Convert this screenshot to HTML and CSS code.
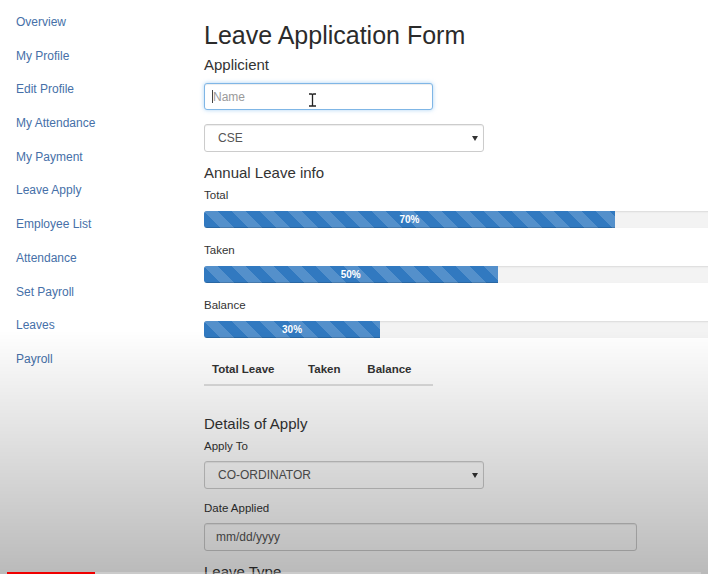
FILE: index.html
```html
<!DOCTYPE html>
<html lang="en">
<head>
<meta charset="utf-8">
<title>Leave Application Form</title>
<link rel="stylesheet" href="styles.css">
</head>
<body>
<div class="page">
  <nav class="sidebar">
    <a class="nav-link" href="#">Overview</a>
    <a class="nav-link" href="#">My Profile</a>
    <a class="nav-link" href="#">Edit Profile</a>
    <a class="nav-link" href="#">My Attendance</a>
    <a class="nav-link" href="#">My Payment</a>
    <a class="nav-link" href="#">Leave Apply</a>
    <a class="nav-link" href="#">Employee List</a>
    <a class="nav-link" href="#">Attendance</a>
    <a class="nav-link" href="#">Set Payroll</a>
    <a class="nav-link" href="#">Leaves</a>
    <a class="nav-link" href="#">Payroll</a>
  </nav>
  <main class="content">
    <h1 class="title">Leave Application Form</h1>
    <h4 class="section">Applicient</h4>
    <div class="name-field">
      <input class="input input-name" type="text" placeholder="Name">
      <span class="text-caret"></span>
      <svg class="ibeam" width="9" height="14" viewBox="0 0 9 14"><path d="M1 1h2.5q1 0 1 1v10q0 1 -1 1H1M8 1H5.5q-1 0 -1 1v10q0 1 1 1H8" fill="none" stroke="#222" stroke-width="1.3"/></svg>
    </div>
    <div class="select-wrap">
      <select class="select"><option>CSE</option></select>
    </div>
    <h4 class="section section-annual">Annual Leave info</h4>
    <div class="label">Total</div>
    <div class="progress"><div class="progress-bar" style="width:70%">70%</div></div>
    <div class="label label-gap">Taken</div>
    <div class="progress"><div class="progress-bar" style="width:50%">50%</div></div>
    <div class="label label-gap">Balance</div>
    <div class="progress"><div class="progress-bar" style="width:30%">30%</div></div>
    <table class="summary">
      <thead>
        <tr><th>Total Leave</th><th>Taken</th><th>Balance</th></tr>
      </thead>
    </table>
    <h4 class="section">Details of Apply</h4>
    <div class="label label-small-gap">Apply To</div>
    <div class="select-wrap select-wrap-tight">
      <select class="select"><option>CO-ORDINATOR</option></select>
    </div>
    <div class="label label-mid-gap">Date Applied</div>
    <input class="input input-date" type="text" placeholder="mm/dd/yyyy">
    <h4 class="section section-leave-type">Leave Type</h4>
  </main>
</div>
<div class="shade"></div>
<div class="yt-progress"><div class="yt-played"></div></div>
</body>
</html>
```
FILE: styles.css
```css
html, body {
  margin: 0;
  padding: 0;
  height: 100%;
  overflow: hidden;
  background: #ffffff;
  font-family: "Liberation Sans", Arial, Helvetica, sans-serif;
  color: #333333;
}

.page {
  display: flex;
  align-items: flex-start;
  width: 820px;
}

.sidebar {
  width: 188px;
  flex: none;
  padding: 6px 0 0 16px;
  display: flex;
  flex-direction: column;
}

.nav-link {
  display: block;
  font-size: 12px;
  line-height: 33.7px;
  height: 33.7px;
  color: #4670a8;
  text-decoration: none;
  white-space: nowrap;
}

.content {
  width: 587px;
  flex: none;
  padding-top: 20px;
}

.title {
  margin: 0;
  font-size: 25px;
  line-height: 30px;
  font-weight: 400;
  color: #2b2b2b;
}

.section {
  margin: 6px 0 0 0;
  font-size: 15px;
  line-height: 18px;
  font-weight: 400;
  color: #333333;
}

.section-annual { margin-top: 12px; }

.section-leave-type { margin-top: 12px; }

.name-field {
  position: relative;
  width: 229px;
  margin-top: 9px;
}

.input {
  box-sizing: border-box;
  display: block;
  height: 27px;
  border: 1px solid #cccccc;
  border-radius: 3px;
  font-family: "Liberation Sans", Arial, Helvetica, sans-serif;
  font-size: 12px;
  color: #555555;
  background: #ffffff;
  outline: none;
  box-shadow: inset 0 1px 1px rgba(0,0,0,0.075);
}

.input-name {
  width: 229px;
  padding: 0 8px;
  border-color: #7fb6e6;
  box-shadow: inset 0 1px 1px rgba(0,0,0,0.075), 0 0 4px rgba(102,175,233,0.55);
}

.input-name::placeholder { color: #9a9a9a; }

.text-caret {
  position: absolute;
  left: 8px;
  top: 7px;
  width: 1px;
  height: 13px;
  background: #444444;
}

.ibeam {
  position: absolute;
  left: 104px;
  top: 10px;
}

.select-wrap {
  position: relative;
  width: 280px;
  margin-top: 14px;
}

.select-wrap-tight { margin-top: 8px; }

.select-wrap::after {
  content: "";
  position: absolute;
  right: 6px;
  top: 12px;
  border-left: 3px solid transparent;
  border-right: 3px solid transparent;
  border-top: 5px solid #333333;
}

.select {
  box-sizing: border-box;
  display: block;
  width: 280px;
  height: 28px;
  padding: 0 0 0 13px;
  border: 1px solid #cccccc;
  border-radius: 3px;
  background: #ffffff;
  font-family: "Liberation Sans", Arial, Helvetica, sans-serif;
  font-size: 12px;
  color: #555555;
  -webkit-appearance: none;
  appearance: none;
  box-shadow: inset 0 1px 1px rgba(0,0,0,0.075);
}

.label {
  margin-top: 6px;
  font-size: 11.5px;
  line-height: 14px;
  color: #333333;
}

.label-gap { margin-top: 15px; }
.label-small-gap { margin-top: 6px; }
.label-mid-gap { margin-top: 12px; }

.progress {
  margin-top: 9px;
  height: 17px;
  width: 587px;
  border-radius: 3px;
  background: #f3f3f3;
  box-shadow: inset 0 1px 2px rgba(0,0,0,0.1);
  overflow: hidden;
}

.progress-bar {
  height: 17px;
  background-color: #3179c0;
  background-image: linear-gradient(45deg,
    rgba(255,255,255,0.17) 25%, transparent 25%,
    transparent 50%, rgba(255,255,255,0.17) 50%,
    rgba(255,255,255,0.17) 75%, transparent 75%, transparent);
  background-size: 28px 28px;
  color: #ffffff;
  font-size: 10px;
  font-weight: 700;
  line-height: 17px;
  text-align: center;
  box-shadow: inset 0 -1px 0 rgba(0,0,0,0.15);
}

.summary {
  width: 229px;
  margin-top: 16px;
  border-collapse: collapse;
  border-spacing: 0;
}

.summary th {
  padding: 8px;
  font-size: 11.5px;
  line-height: 14px;
  font-weight: 700;
  text-align: left;
  color: #333333;
  border-bottom: 2px solid #dddddd;
  white-space: nowrap;
}

.summary + .section { margin-top: 29px; }

.input-date {
  width: 433px;
  height: 28px;
  margin-top: 8px;
  padding: 0 11px;
}

.input-date::placeholder { color: #555555; }

.shade {
  position: fixed;
  left: 0;
  top: 0;
  width: 100%;
  height: 100%;
  pointer-events: none;
  background: linear-gradient(to bottom, rgba(0,0,0,0) 330px, rgba(0,0,0,0.27) 574px);
}

.yt-progress {
  position: fixed;
  left: 7px;
  right: 7px;
  bottom: 0;
  height: 2px;
  background: rgba(255,255,255,0.25);
}

.yt-played {
  width: 88px;
  height: 2px;
  background: #f00000;
}
```
